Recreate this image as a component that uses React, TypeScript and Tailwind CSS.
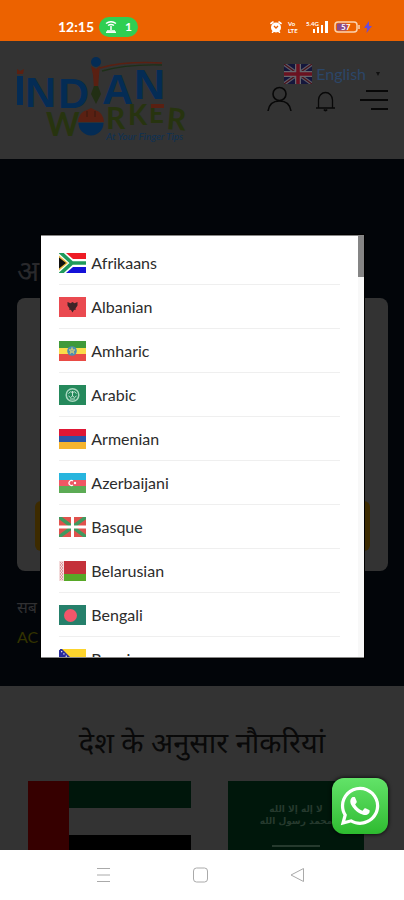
import type { ReactNode } from "react";
import { FaWhatsapp } from "react-icons/fa";

const languages: { name: string; flag: ReactNode }[] = [
  {
    name: "Afrikaans",
    flag: (
      <>
        <path fill="#fff" d="M0 0h27v20H0z" />
        <path fill="#ee1c25" d="M7 0h20v6H14z" />
        <path fill="#1411d8" d="M7 20h20v-6H14z" />
        <path fill="none" stroke="#1f9a5c" strokeWidth="3.6" d="M1 -1l12 11L1 21M12 10h15" />
        <path fill="#e8b93c" d="M0 2.500L9 10l-9 7.500z" />
        <path fill="#111" d="M0 4.500L7 10l-7 5.500z" />
      </>
    ),
  },
  {
    name: "Albanian",
    flag: (
      <>
        <path fill="#ea4a50" d="M0 0h27v20H0z" />
        <path fill="#3f2528" d="M8.500 5l3 1.200L13.500 5l2 1.200L18.500 5v3.500l-2 3 .5 1-2 .5-1.500 2.500-1.500-2.500-2-.5.5-1-2-3z" />
      </>
    ),
  },
  {
    name: "Amharic",
    flag: (
      <>
        <path fill="#3f9a3a" d="M0 0h27v7H0z" />
        <path fill="#fbdc4a" d="M0 7h27v6H0z" />
        <path fill="#e94b45" d="M0 13h27v7H0z" />
        <circle cx="13" cy="10" r="4.800" fill="#4c8fb0" />
        <path fill="none" stroke="#d9d27a" strokeWidth=".8" d="M13 6.500l2 6-5-3.700h6l-5 3.700z" />
      </>
    ),
  },
  {
    name: "Arabic",
    flag: (
      <>
        <path fill="#25895c" d="M0 0h27v20H0z" />
        <circle cx="13.500" cy="10" r="6.300" fill="none" stroke="#a9d6bf" strokeWidth="1.500" />
        <path fill="none" stroke="#c6e4d5" d="M9.500 8.500q2-3 4-1 2-2 4 1M9.500 11q2 3 4 0 2 3 4 0M11 14h5M13.500 6v5" />
      </>
    ),
  },
  {
    name: "Armenian",
    flag: (
      <>
        <path fill="#df1735" d="M0 0h27v7H0z" />
        <path fill="#2b55a8" d="M0 7h27v6H0z" />
        <path fill="#f5b42e" d="M0 13h27v7H0z" />
      </>
    ),
  },
  {
    name: "Azerbaijani",
    flag: (
      <>
        <path fill="#28b5de" d="M0 0h27v7H0z" />
        <path fill="#ef5664" d="M0 7h27v6H0z" />
        <path fill="#5cab55" d="M0 13h27v7H0z" />
        <path fill="none" stroke="#fff" strokeWidth="1.200" d="M14 8a2.500 2.500 0 1 0 0 4" />
        <circle cx="16" cy="10" r="1.200" fill="#fff" />
      </>
    ),
  },
  {
    name: "Basque",
    flag: (
      <>
        <path fill="#e0524d" d="M0 0h27v20H0z" />
        <path stroke="#3f9a5f" strokeWidth="3.500" d="M0 0l27 20M27 0L0 20" />
        <path stroke="#fff" strokeWidth="3" d="M13.500 0v20M0 10h27" />
      </>
    ),
  },
  {
    name: "Belarusian",
    flag: (
      <>
        <path fill="#c4313a" d="M0 0h27v13H0z" />
        <path fill="#57a827" d="M0 13h27v7H0z" />
        <path fill="#f3dcdc" d="M0 0h5v20H0z" />
        <path
          fill="none"
          stroke="#dc8a90"
          strokeWidth=".8"
          d="M1 1l3 3-3 3 3 3-3 3 3 3-3 3M4 1L1 4l3 3-3 3 3 3-3 3 3 3"
        />
      </>
    ),
  },
  {
    name: "Bengali",
    flag: (
      <>
        <path fill="#26806b" d="M0 0h27v20H0z" />
        <circle cx="11.500" cy="10.500" r="6.500" fill="#f2566a" />
      </>
    ),
  },
  {
    name: "Bosnian",
    flag: (
      <>
        <path fill="#2a2c9c" d="M0 0h27v20H0z" />
        <path fill="#fcd42d" d="M3 0h24v20h-4z" />
        <path stroke="#fff" strokeWidth="1.200" strokeDasharray="1.200 2" d="M0 0l20 20" />
      </>
    ),
  },
];

function StatusBar() {
  return (
    <div className="flex h-[41px] shrink-0 items-center justify-between bg-[#ec6200] pt-3 pr-8 pl-[58px] text-white">
      <div className="flex items-center gap-[5px]">
        <span className="text-sm font-bold">12:15</span>
        <span className="flex h-5 items-center gap-2 rounded-full bg-[#2fcf52] px-1.5 text-xs font-bold">
          <svg className="h-3 w-3" viewBox="0 0 12 12" fill="none" stroke="#fff" strokeWidth="1.500">
            <path d="M1 2.500Q6-1 11 2.500M3 4.500q3-2 6 0" />
            <path d="M6 5v4M2 10h8" />
            <path d="M1 11.200h10" />
          </svg>
          1
        </span>
      </div>
      <div className="flex items-center gap-1">
        <svg className="h-3 w-3" viewBox="0 0 12 12">
          <circle cx="6" cy="6.500" r="5" fill="#fff" />
          <path stroke="#fff" strokeWidth="1.600" strokeLinecap="round" d="M1 2.500L3 1M11 2.500L9 1M2.500 11.300l1-1M9.500 11.300l-1-1" />
          <path stroke="#ec6200" strokeWidth="1.300" fill="none" d="M4 5l2 2 2-2" />
        </svg>
        <span className="flex w-4 flex-col pl-0.5 text-[6px] leading-[7px] font-bold">
          <span>Vo</span>
          <span>LTE</span>
        </span>
        <svg className="h-3 w-6" viewBox="0 0 24 12" fill="#fff">
          <text x="0" y="5" fontSize="6" fontWeight="700">5.4G</text>
          <path d="M7 8h2v4H7zM11 6h2v6h-2zM15 4h2v8h-2zM19 0h3v12h-3z" />
        </svg>
        <svg className="h-3 w-[26px]" viewBox="0 0 26 12">
          <rect x="1" y="1" width="22" height="10" rx="3" fill="none" stroke="#fbd3b0" strokeWidth="1.500" />
          <rect x="3" y="2.500" width="10" height="7" rx="1" fill="#8a4b8c" />
          <path stroke="#fbd3b0" strokeWidth="1.500" d="M25 4v4" />
          <text x="7" y="9" fontSize="8" fontWeight="700" fill="#fff">57</text>
        </svg>
        <svg className="h-3 w-2" viewBox="0 0 8 12" fill="#6b4bd6">
          <path d="M5 0L0 7h3L2.500 12 8 5H5z" />
        </svg>
      </div>
    </div>
  );
}

function Logo() {
  return (
    <svg className="h-[88px] w-[174px]" viewBox="0 0 174 88" role="img" aria-label="Indian Worker">
      <g fill="#042c55" fontFamily="Liberation Sans" fontWeight="700" fontSize="43">
        <path d="M2 20h6v29H2z" />
        <text x="10" y="51">N</text>
        <text x="43" y="52">D</text>
        <text x="87" y="48">A</text>
        <text x="119" y="43">N</text>
      </g>
      <path fill="#5a2012" d="M2 13l3 2 4-2-1 5H2z" />
      {/* torch bearer standing in for the second I */}
      <circle cx="81" cy="6" r="5" fill="#042c55" />
      <path fill="#5a2012" d="M76 10l5 3 4-3-1 9-1 13h-4l-1-13z" />
      <path fill="#222f14" d="M79 30h4l3 8-5 10-5-10z" />
      <path fill="none" stroke="#5a2012" strokeWidth="1.500" d="M85 12q24-7 62-5" />
      <path fill="none" stroke="#1e3018" strokeWidth="1.500" d="M87 15q24-7 60-6" />
      <g fill="#27340f" fontFamily="Lato" fontWeight="700">
        <text x="31" y="80" fontSize="32">W</text>
        <text x="91" y="73" fontSize="30">R</text>
        <text x="113" y="69" fontSize="28">K</text>
        <text x="134" y="67" fontSize="26">E</text>
        <text x="151" y="73" fontSize="30" transform="rotate(5 151 73)">R</text>
      </g>
      <path fill="#5a2012" d="M136 48h13v4h-13z" />
      <circle cx="76" cy="67" r="12.500" fill="#042c55" />
      <path fill="#5a2012" d="M63 66q1-10 9-12l4-2 4 2q8 2 9 12z" />
      <path stroke="#333" strokeWidth=".8" d="M62 66.500h28" />
      <path fill="none" stroke="#2e1710" strokeWidth=".8" d="M72 55v6M80 55v6" />
      <text x="91" y="84" fill="#0d3153" fontFamily="Lato" fontStyle="italic" fontSize="10">
        At Your Finger Tips
      </text>
    </svg>
  );
}

function Header() {
  return (
    <header className="flex h-[118px] items-start justify-between bg-[#333] pt-[15px] pr-4 pl-[15px]">
      <a href="#">
        <Logo />
      </a>
      <div className="flex flex-col items-end">
        <button className="mt-1.5 flex items-center gap-1 pr-2 text-base leading-6 text-[#2c4668]">
          <svg className="h-5 w-7" viewBox="0 0 28 20">
            <path fill="#14163c" d="M0 0h28v20H0z" />
            <path stroke="#5c5c66" strokeWidth="3.500" d="M0 0l28 20M28 0L0 20" />
            <path stroke="#4a1018" strokeWidth="1.200" d="M0 0l28 20M28 0L0 20" />
            <path stroke="#66666c" strokeWidth="6" d="M14 0v20M0 10h28" />
            <path stroke="#6a1220" strokeWidth="3.500" d="M14 0v20M0 10h28" />
          </svg>
          <span>English</span>
          <svg className="ml-1.5 h-1 w-1" viewBox="0 0 4 4" fill="#111">
            <path d="M0 0h4L2 4z" />
          </svg>
        </button>
        <div className="flex items-end gap-6">
          <button aria-label="Account">
            <svg className="h-[26px] w-[26px]" viewBox="0 0 26 26" fill="none" stroke="#080808" strokeWidth="1.600">
              <circle cx="13.500" cy="8" r="6.500" />
              <path d="M2 25Q3.500 15 13.500 15T25 25" />
            </svg>
          </button>
          <button aria-label="Notifications">
            <svg className="h-[22px] w-5" viewBox="0 0 20 22" fill="none" stroke="#080808" strokeWidth="1.300">
              <path d="M0 18h19M2.500 18V10a7 7.500 0 0 1 14 0v8" />
              <path d="M8 19.500q1.500 2 3 0" strokeWidth="2" />
            </svg>
          </button>
          <button aria-label="Menu" className="pb-0.5">
            <svg className="h-5 w-7" viewBox="0 0 28 20" stroke="#080808" strokeWidth="2">
              <path d="M6 1h22M0 10h28M11 19h17" />
            </svg>
          </button>
        </div>
      </div>
    </header>
  );
}

function Hero() {
  return (
    <section className="bg-[#020509] pt-[95px] pr-4 pb-[35px] pl-[17px]">
      <h1 className="h-8 text-[29px] leading-8 text-[#29292c]">अ</h1>
      <div className="mt-3 flex h-[273px] flex-col justify-end rounded-lg bg-[#333] px-[18px] pb-5">
        <button aria-label="Search" className="h-[50px] rounded-md bg-[#3d2b00]" />
      </div>
      <p className="mt-6 text-base leading-6 text-[#303032]">सब</p>
      <p className="mt-1 text-base leading-7 text-[#333300]">AC</p>
    </section>
  );
}

function Countries() {
  return (
    <section className="bg-[#333] px-7 pt-[34px]">
      <h2 className="text-center text-[29px] leading-[44px] whitespace-nowrap text-[#090909]">देश के अनुसार नौकरियां</h2>
      <div className="mt-[17px] flex justify-between pr-3">
        <svg className="h-[81px] w-[163px]" viewBox="0 0 163 81">
          <path fill="#00160b" d="M41 0h122v27H41z" />
          <path d="M41 54h122v27H41z" />
          <path fill="#360000" d="M0 0h41v81H0z" />
        </svg>
        <svg className="h-[90px] w-[136px]" viewBox="0 0 136 90">
          <path fill="#00170b" d="M0 0h136v90H0z" />
          <g fill="#263a2e" fontFamily="DejaVu Sans" fontSize="9" fontWeight="700" textAnchor="middle">
            <text x="68" y="31">لا إله إلا الله</text>
            <text x="68" y="43">محمد رسول الله</text>
          </g>
          <path stroke="#263a2e" strokeWidth="2" d="M44 65h48" />
        </svg>
      </div>
    </section>
  );
}

function LanguageDialog() {
  return (
    <div className="absolute inset-0 flex items-center justify-center pt-0.5 pl-px">
      <div
        role="dialog"
        aria-label="Language"
        className="relative h-[423px] w-4/5 overflow-hidden border-y border-[#888] bg-white pt-[5px] pr-6 pl-[18px] ring-1 ring-black"
      >
        <ul>
          {languages.map((l) => (
            <li key={l.name} className="border-b border-[#efefef]">
              <a href="#" className="flex h-[43px] items-center gap-[5px] text-base text-[#2c2c2c]">
                <svg className="h-5 w-[27px]" viewBox="0 0 27 20">
                  {l.flag}
                </svg>
                {l.name}
              </a>
            </li>
          ))}
        </ul>
        {/* scroll bar */}
        <div className="absolute inset-y-0 right-0 w-1.5 bg-[#f8f8f8]">
          <div className="h-[41px] bg-[#858585]" />
        </div>
      </div>
    </div>
  );
}

function NavBar() {
  return (
    <nav className="flex h-[50px] shrink-0 items-center justify-center gap-[82px] bg-white pr-1">
      <button aria-label="Recent apps">
        <svg className="h-4 w-[15px]" viewBox="0 0 15 16" stroke="#aaa">
          <path d="M1 1.500h13M1 8h13M1 14.500h13" />
        </svg>
      </button>
      <button aria-label="Home">
        <svg className="h-4 w-[15px]" viewBox="0 0 15 16" fill="none" stroke="#aaa">
          <rect x=".5" y="1" width="14" height="14" rx="3" />
        </svg>
      </button>
      <button aria-label="Back">
        <svg className="h-4 w-[15px]" viewBox="0 0 15 16" fill="none" stroke="#aaa" strokeLinejoin="round">
          <path d="M1 8l12.500-6.500v13z" />
        </svg>
      </button>
    </nav>
  );
}

export default function App() {
  return (
    <div className="flex h-screen flex-col overflow-hidden bg-[#333] font-[Lato,'Noto_Sans',sans-serif]">
      <StatusBar />
      <main className="relative min-h-0 flex-1 overflow-hidden">
        <Header />
        <Hero />
        <Countries />
        <LanguageDialog />
        <a
          href="#"
          aria-label="WhatsApp"
          className="absolute right-4 bottom-4 flex h-14 w-14 items-center justify-center rounded-xl bg-linear-to-b from-[#62e368] to-[#2dbb2f] text-white shadow-[0_0_4px_#000]"
        >
          <FaWhatsapp className="h-11 w-11" />
        </a>
      </main>
      <NavBar />
    </div>
  );
}
